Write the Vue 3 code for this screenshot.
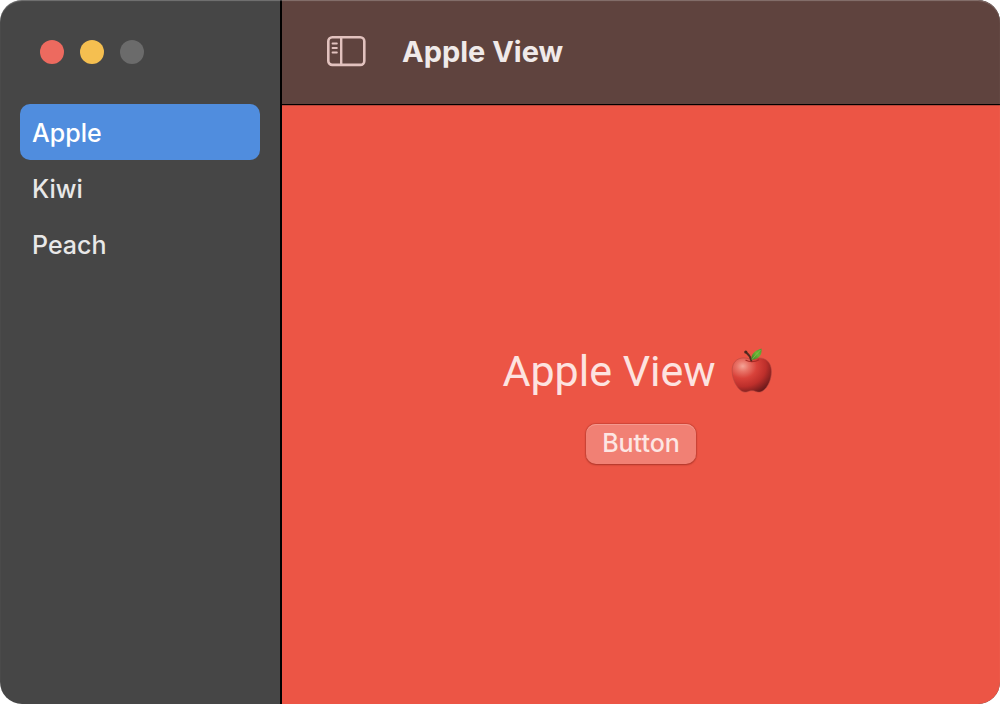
<script setup>
import { ref, computed } from 'vue'

const fruits = ['Apple', 'Kiwi', 'Peach']
const selected = ref('Apple')
const sidebarOpen = ref(true)
const title = computed(() => `${selected.value} View`)
</script>

<template>
  <div class="window">
    <aside v-show="sidebarOpen" class="sidebar">
      <div class="lights">
        <button class="light close" type="button" aria-label="Close"></button>
        <button class="light minimize" type="button" aria-label="Minimize"></button>
        <button class="light zoom" type="button" aria-label="Zoom" disabled></button>
      </div>
      <nav class="list">
        <button
          v-for="fruit in fruits"
          :key="fruit"
          type="button"
          class="item"
          :class="{ active: fruit === selected }"
          @click="selected = fruit"
        >{{ fruit }}</button>
      </nav>
    </aside>
    <section class="pane">
      <header class="toolbar">
        <button class="toggle" type="button" aria-label="Toggle sidebar" @click="sidebarOpen = !sidebarOpen">
          <svg width="40" height="32" viewBox="0 0 40 32" fill="none" stroke="#e2c2be">
            <rect x="2.3" y="1.3" width="36" height="27.600" rx="4" stroke-width="2.6" />
            <path d="M15.2 1.500V28.800" stroke-width="2.4" />
            <path d="M6.500 7.500h4.400M6.500 12h4.400M6.500 16.500h4.400" stroke-width="1.8" stroke-linecap="round" />
          </svg>
        </button>
        <h1 class="title">{{ title }}</h1>
      </header>
      <main class="content">
        <div class="heading">
          <span>{{ title }}</span>
          <svg class="apple" width="44" height="48" viewBox="0 0 44 48" aria-hidden="true">
            <defs>
              <radialGradient id="skin" cx="0.27" cy="0.24" r="0.85">
                <stop offset="0" stop-color="#f5a497" />
                <stop offset="0.18" stop-color="#e97468" />
                <stop offset="0.42" stop-color="#d9423a" />
                <stop offset="0.7" stop-color="#bd2f2b" />
                <stop offset="1" stop-color="#6c1a1b" />
              </radialGradient>
              <linearGradient id="leaf" x1="0" y1="1" x2="1" y2="0">
                <stop offset="0" stop-color="#3f7d25" />
                <stop offset="0.55" stop-color="#6db536" />
                <stop offset="1" stop-color="#4d9630" />
              </linearGradient>
            </defs>
            <path d="M21 12.5C17 10.8 12 10.200 8 12.2C3.500 14.600 1.800 19.500 2.200 25C2.600 33 6.500 40.500 11.500 44C14.500 46 17.500 44.800 19.500 44C21 43.500 23 43.500 24.500 44C27 45 30 46 33 43.800C38 40 41.200 33 41.400 25C41.500 19 39.300 14.500 35 12.300C30.500 10.200 25.500 10.800 21 12.5Z" fill="url(#skin)" stroke="#b5483f" stroke-width="0.6" />
            <path d="M16 13.300C19 15.200 25 15.200 28.500 13" fill="none" stroke="#a92b26" stroke-width="1.3" stroke-linecap="round" />
            <path d="M21.300 13.500C20.600 10 18.700 7.500 16 5.200" fill="none" stroke="#542c20" stroke-width="2" stroke-linecap="round" />
            <circle cx="15.800" cy="5" r="1.600" fill="#49261e" />
            <path d="M21.500 12.800C20.500 8.500 24 3.500 31.500 1.500C32.300 7.500 29 12.500 21.500 12.800Z" fill="url(#leaf)" />
            <path d="M22 12.500C24.500 9 27.500 6 30.500 3" fill="none" stroke="#94cf5c" stroke-width="0.600" />
          </svg>
        </div>
        <button class="push" type="button">Button</button>
      </main>
    </section>
  </div>
</template>

<style>
body {
  background: #fff;
}
</style>

<style scoped>
.window {
  display: flex;
  min-height: 100vh;
  border-radius: 22px;
  overflow: hidden;
  box-sizing: border-box;
  background: #464646;
  font-family: Inter, "Liberation Sans", sans-serif;
  position: relative;
}
.window::after {
  content: "";
  position: absolute;
  inset: 0;
  border-radius: 22px;
  box-shadow: inset 0 1px 1px rgba(255, 255, 255, 0.25);
  pointer-events: none;
}
button {
  font: inherit;
  border: 0;
  padding: 0;
  margin: 0;
  background: none;
}
.sidebar {
  flex: none;
  width: 240px;
  padding: 40px 20px 20px;
  border-right: 2px solid #000;
}
.lights {
  display: flex;
  gap: 16px;
  padding: 0 20px;
  margin-bottom: 40px;
}
.light {
  width: 24px;
  height: 24px;
  border-radius: 50%;
}
.close { background: #ed6a5f; }
.minimize { background: #f5bf50; }
.zoom { background: #6b6b6b; }
.list {
  display: flex;
  flex-direction: column;
}
.item {
  padding: 2px 12px 0;
  border-radius: 10px;
  text-align: left;
  font-size: 25px;
  font-weight: 500;
  line-height: 54px;
  color: #e8e8e8;
}
.item.active {
  background: #508dde;
  color: #fff;
}
.pane {
  flex: 1;
  min-width: 0;
  display: flex;
  flex-direction: column;
}
.toolbar {
  box-sizing: border-box;
  height: 105px;
  padding: 0 44px;
  display: flex;
  align-items: center;
  gap: 36px;
  background: #5f433e;
  border-bottom: 1px solid #000;
}
.toggle {
  display: flex;
}
.toggle svg {
  display: block;
}
.title {
  margin: 0;
  font-size: 29px;
  line-height: 36px;
  font-weight: 700;
  color: #f0eae9;
}
.content {
  flex: 1;
  display: flex;
  flex-direction: column;
  align-items: center;
  justify-content: center;
  gap: 27px;
  padding-bottom: 1px;
  background: #ec5545;
  box-shadow: inset 0 1px 0 #b9463a;
}
.heading {
  display: flex;
  align-items: center;
  gap: 14px;
  padding-right: 6px;
  font-family: Roboto, Inter, sans-serif;
  font-size: 43px;
  line-height: 52px;
  color: #fde3e0;
}
.apple {
  display: block;
}
.push {
  padding: 0 16px 2px;
  border-radius: 10px;
  font-size: 25px;
  font-weight: 500;
  line-height: 38px;
  color: #fde6e3;
  background: #f18074;
  box-shadow: inset 0 1px 0 #f4998f, 0 0 1px 1px rgba(150, 40, 30, 0.3), 0 1px 2px rgba(120, 30, 20, 0.4);
}
</style>
